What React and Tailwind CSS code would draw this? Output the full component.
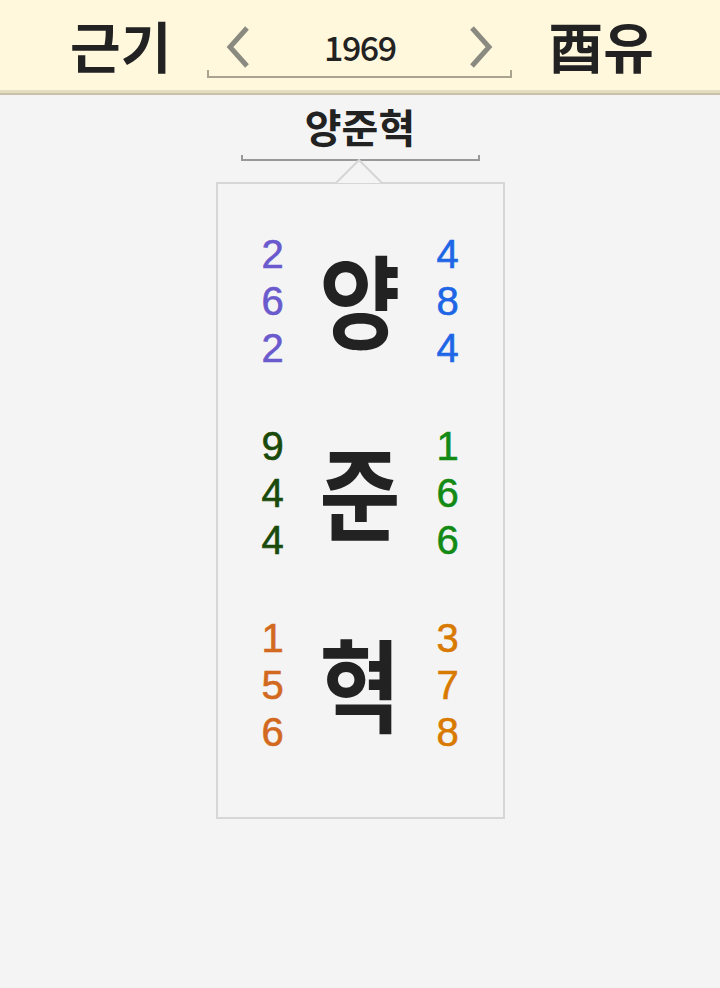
import React from 'react';

const FONT = { fontFamily: '"Noto Sans CJK KR", "Noto Sans", sans-serif' };
const DIGIT_FONT = { fontFamily: '"Liberation Sans", Arial, sans-serif' };

const rows = [
  { ch: '양', left: ['2', '6', '2'], right: ['4', '8', '4'], lc: 'text-[#6a5acd]', rc: 'text-[#1e66e6]' },
  { ch: '준', left: ['9', '4', '4'], right: ['1', '6', '6'], lc: 'text-[#1a4a0a]', rc: 'text-[#138a13]' },
  { ch: '혁', left: ['1', '5', '6'], right: ['3', '7', '8'], lc: 'text-[#d2691e]', rc: 'text-[#d97a00]' },
];

const Chevron = ({ dir }) => (
  <svg width="26" height="42" viewBox="0 0 26 42">
    <path
      d={dir === 'left' ? 'M22 2 L5 21 L22 40' : 'M4 2 L21 21 L4 40'}
      fill="none"
      stroke="#8b8a80"
      strokeWidth="5"
    />
  </svg>
);

const Digits = ({ items, color }) => (
  <div className={`flex flex-col items-center translate-y-[4px] ${color}`} style={{ ...DIGIT_FONT, WebkitTextStroke: '0.6px currentColor' }}>
    {items.map((d, i) => (
      <span key={i} className="text-[40px] leading-[47px]">
        {d}
      </span>
    ))}
  </div>
);

export default function App() {
  return (
    <div className="min-h-[988px] w-[720px] bg-[#f4f4f4]" style={FONT}>
      <header className="h-[95px] bg-[#fff8dc] border-b-[5px] border-[#e3dcbf] relative">
        <div className="h-[90px] flex items-center justify-center gap-[36px] pl-[4px]">
          <div className="text-[55px] font-bold text-[#222] leading-none pb-[2px]">근기</div>
          <div className="w-[305px] flex flex-col mt-[12px]">
            <div className="h-[45px] flex items-center justify-between px-[18px]">
              <Chevron dir="left" />
              <div className="text-[34px] text-[#222] font-medium tracking-[-1.5px] leading-none">1969</div>
              <Chevron dir="right" />
            </div>
            <div className="h-[8px] border-x-2 border-b-2 border-[#a8a490]" />
          </div>
          <div className="text-[55px] font-bold text-[#222] leading-none pb-[2px]">酉유</div>
        </div>
        <div className="absolute left-0 right-0 bottom-[-5px] h-[2px] bg-[#c8c0a8]" />
      </header>

      <div className="flex flex-col items-center">
        <div className="mt-[2px] text-[40px] font-bold text-[#222] leading-[58px]">양준혁</div>
        <div className="w-[239px] h-[6px] border-b-2 border-x-2 border-[#999]" />
        <div className="relative mt-[21px] w-[289px] border-2 border-[#d6d6d6] bg-[#f4f4f4] pt-[17px] pb-[40px]">
          <svg className="absolute left-[116px] -top-[25px]" width="52" height="26" viewBox="0 0 52 26">
            <path d="M0 24 L2 24 L25 1 L48 24 L52 24" fill="#f4f4f4" stroke="#d6d6d6" strokeWidth="2" />
          </svg>
          {rows.map((r, i) => (
            <div key={i} className="h-[192px] grid grid-cols-[40px_1fr_40px] px-[35px] items-center">
              <Digits items={r.left} color={r.lc} />
              <div className="text-center text-[88px] font-bold text-[#222] leading-none scale-y-[1.15]">{r.ch}</div>
              <Digits items={r.right} color={r.rc} />
            </div>
          ))}
        </div>
      </div>
    </div>
  );
}
